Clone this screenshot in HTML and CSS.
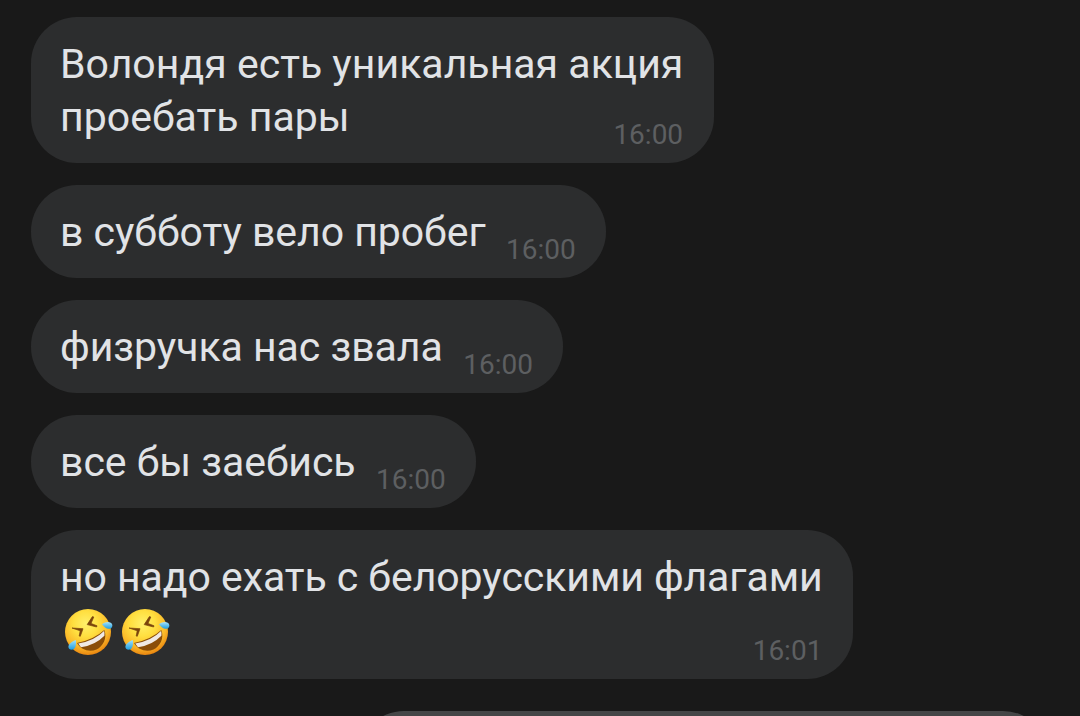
FILE: index.html
```html
<!DOCTYPE html>
<html lang="ru">
<head>
  <meta charset="UTF-8" />
  <meta name="viewport" content="width=device-width, initial-scale=1.0" />
  <title>Чат</title>
  <link rel="stylesheet" href="styles.css">
</head>
<body>
  <svg class="defs" width="0" height="0">
    <defs>
      <radialGradient id="face" cx="0.45" cy="0.32" r="0.68">
        <stop offset="0" stop-color="#fff06a" />
        <stop offset="0.4" stop-color="#ffdf40" />
        <stop offset="0.75" stop-color="#fbb929" />
        <stop offset="1" stop-color="#e98610" />
      </radialGradient>
      <linearGradient id="tear" x1="0" y1="0" x2="0" y2="1">
        <stop offset="0" stop-color="#a5e2fa" />
        <stop offset="1" stop-color="#1f9ee0" />
      </linearGradient>
      <symbol id="rofl" viewBox="0 0 49 48">
        <circle cx="24" cy="24" r="23" fill="url(#face)" />
        <path d="M13 35 Q30 31.5 40.3 22 C43.5 30 39 38.5 32.5 41.5 C25.5 44.5 17 42 13 35Z" fill="#8a4d08" />
        <path d="M14.2 35.6 Q31 32.5 40 23 Q41 25.5 40.4 27.8 Q31 37.5 17 39.2Z" fill="#f0e9e4" />
        <path d="M8 20 L19 20.7 L16.3 28.3 L15.2 28 L16.2 22.8Z M28.4 8.6 L29.8 9 L27 15.4 L33 17.8 L32.6 19 L23.2 16.6Z" fill="#7a430b" stroke="#7a430b" stroke-width="0.7" stroke-linejoin="round" />
        <path d="M11.8 32 C8 33.5 4.6 36 4.4 38.8 C4.3 41.8 8.6 42.6 10.4 40.5 C12.2 38.5 12.2 35 11.8 32Z" fill="url(#tear)" />
        <path d="M38 16.2 C41 14 44.5 13.6 46.7 14.7 C49.3 16.2 48.7 20 46 20.7 C43 21.5 40 19 38 16.2Z" fill="url(#tear)" />
      </symbol>
    </defs>
  </svg>
  <div class="chat">
    <div class="message first">
      <div class="text">Волондя есть уникальная акция<br>проебать пары</div>
      <span class="time">16:00</span>
    </div>
    <div class="message">
      <div class="text">в субботу вело пробег</div>
      <span class="time">16:00</span>
    </div>
    <div class="message">
      <div class="text">физручка нас звала</div>
      <span class="time">16:00</span>
    </div>
    <div class="message">
      <div class="text">все бы заебись</div>
      <span class="time">16:00</span>
    </div>
    <div class="message last">
      <div class="text">но надо ехать с белорусскими флагами
        <div class="emojis">
          <svg class="emoji"><use href="#rofl" /></svg>
          <svg class="emoji"><use href="#rofl" /></svg>
        </div>
      </div>
      <span class="time">16:01</span>
    </div>
    <div class="message own"></div>
  </div>
</body>
</html>
```

FILE: styles.css
```css
* {
  box-sizing: border-box;
}
body {
  margin: 0;
  background: #191919;
  font-family: Roboto, sans-serif;
}
.defs {
  display: block;
}
.chat {
  display: flex;
  flex-direction: column;
  align-items: flex-start;
  gap: 22px;
  height: 716px;
  padding: 17px 31px 0 31px;
  overflow: hidden;
}
.message {
  display: flex;
  align-items: flex-end;
  flex-shrink: 0;
  width: max-content;
  height: 93px;
  padding: 21px 30px 0 29px;
  border-radius: 46px;
  background: #2c2d2e;
  color: #e1e3e6;
}
.text {
  align-self: flex-start;
  font-size: 41px;
  line-height: 53px;
  letter-spacing: -0.04px;
  white-space: nowrap;
}
.time {
  margin-left: 20.5px;
  padding-bottom: 11px;
  font-size: 28px;
  line-height: 34px;
  color: #5d5f61;
}
.first {
  width: 683px;
  height: 146px;
}
.last {
  width: 822px;
  height: 149px;
}
.first .text {
  letter-spacing: 0.02px;
}
.last .text {
  letter-spacing: -0.06px;
}
.first .time,
.last .time {
  margin-left: -70px;
}
.emojis {
  display: flex;
  gap: 8px;
  padding: 4px 0 0 4px;
}
.emoji {
  width: 49px;
  height: 48px;
}
.own {
  align-self: flex-end;
  width: 691px;
  margin-top: 10px;
  background: #454647;
}
```
